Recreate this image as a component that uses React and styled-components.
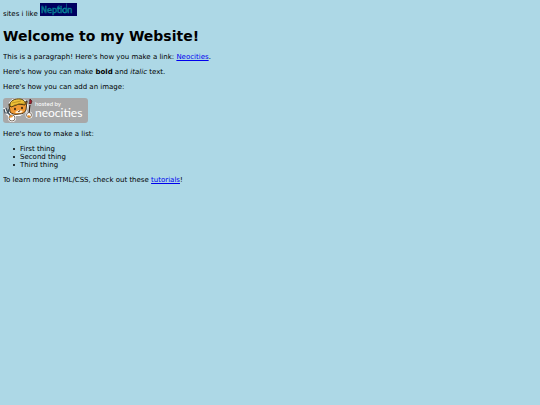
import React from "react";
import styled, { createGlobalStyle } from "styled-components";

const GlobalStyle = createGlobalStyle`
  body {
    margin: 3px;
    background-color: lightblue;
    color: black;
    font-family: Verdana, "DejaVu Sans", sans-serif;
    font-size: 7px;
    line-height: 8px;
  }
`;

const Page = styled.main`
  display: flex;
  flex-direction: column;
  gap: 7px;
`;

const Intro = styled.div`
  display: flex;
  align-items: flex-end;
  gap: 2px;
`;

const Title = styled.h1`
  margin: 3px 0 2px;
  font-size: 14px;
  line-height: 16px;
`;

const Paragraph = styled.p`
  margin: 0;
`;

const Link = styled.a`
  color: #0000ee;
  text-decoration: underline;
`;

const List = styled.ul`
  margin: 0;
  padding-left: 10px;
  list-style: none;
`;

const ListItem = styled.li`
  display: flex;
  align-items: center;
  gap: 5px;

  &::before {
    content: "";
    width: 2px;
    height: 2px;
    border-radius: 1px;
    background: black;
  }
`;

const SiteButton = styled.svg`
  display: block;
  width: 37px;
  height: 13px;
  margin-bottom: 2px;
`;

const HostBadge = styled.svg`
  display: block;
  width: 85px;
  height: 25px;
  overflow: visible;
`;

function FavouriteSite() {
  return (
    <SiteButton viewBox="0 0 37 13" role="img" aria-label="Neption">
      <rect width="37" height="13" fill="#000060" />
      <text
        x="1"
        y="10"
        fill="#001f68"
        stroke="#087f94"
        strokeWidth="0.6"
        fontFamily="DejaVu Sans, sans-serif"
        fontSize="8"
      >
        Neption
      </text>
      <g fill="none" stroke="#0aa0a8" strokeWidth="0.5">
        <circle cx="25" cy="7.5" r="2.5" />
        <path d="M19 2v5M26.500 0.500v5M17 5h5" />
      </g>
    </SiteButton>
  );
}

function NeocitiesBadge() {
  return (
    <HostBadge viewBox="0 0 85 25" role="img" aria-label="Hosted by Neocities">
      <rect width="85" height="25" rx="3" fill="#a8a8a8" />
      <g stroke="#fff" strokeWidth="2" strokeLinejoin="round" fill="#fff">
        <path d="M7 14L7 5L10 2L16 1L22 3L24 7L23 13L17 17H10z" />
        <path d="M1 10L3 15L8 19M27 3L26 15" />
        <circle cx="9" cy="20" r="3" />
        <circle cx="26" cy="17" r="2.5" />
      </g>
      <path
        d="M7 14L6 6L10 7L19 6L24 3L23 12C22 15 19 16 16 16C12 17 9 16 7 14z"
        fill="#f09a35"
        stroke="#30200c"
        strokeWidth="0.9"
      />
      <path
        d="M7 8C6 3 12 0 18 1C21 2 23 4 22 7L16 6L8 9z"
        fill="#ecc038"
        stroke="#3c2c0c"
        strokeWidth="0.9"
      />
      <path d="M9 5L18 3M11 7L21 5" stroke="#a67b16" strokeWidth="0.6" />
      <path d="M12 14L16 12L20 13L18 15H13z" fill="#fff0d8" />
      <ellipse cx="12" cy="11" rx="0.8" ry="1.200" fill="#20140c" />
      <ellipse cx="19" cy="10" rx="0.8" ry="1.200" fill="#20140c" />
      <path d="M15 13L16 14L17 12" stroke="#40200c" strokeWidth="0.7" fill="none" />
      <path
        d="M1 11L2 15L5 15L8 18M3 10L5 15M6 11L5 15"
        stroke="#43535d"
        strokeWidth="1.200"
        fill="none"
      />
      <path d="M27 7L26 15" stroke="#33241c" strokeWidth="1.400" />
      <path d="M26 6L27 1L29 3L28 6z" fill="#a01c28" stroke="#3c1014" strokeWidth="0.6" />
      <circle cx="9" cy="20" r="3" fill="#fff" stroke="#493828" strokeWidth="0.7" />
      <path d="M6 20a3 3 0 0 1 3-3l1 2z" fill="#e99431" />
      <circle cx="26" cy="17" r="2.500" fill="#fff" stroke="#493828" strokeWidth="0.7" />
      <path d="M24 18a3 3 0 0 0 4 1l-2-2z" fill="#e99431" />
      <g fill="#fff" fontFamily="Lato, sans-serif">
        <text x="32" y="8" fontSize="6">
          hosted by
        </text>
        <text x="32" y="19" fontSize="12">
          neocities
        </text>
      </g>
    </HostBadge>
  );
}

function App() {
  return (
    <>
      <GlobalStyle />
      <Page>
        <Intro>
          <span>sites i like</span>
          <FavouriteSite />
        </Intro>
        <Title>Welcome to my Website!</Title>
        <Paragraph>
          This is a paragraph! Here's how you make a link:{" "}
          <Link href="https://neocities.org">Neocities</Link>.
        </Paragraph>
        <Paragraph>
          Here's how you can make <strong>bold</strong> and <em>italic</em> text.
        </Paragraph>
        <Paragraph>Here's how you can add an image:</Paragraph>
        <NeocitiesBadge />
        <Paragraph>Here's how to make a list:</Paragraph>
        <List>
          <ListItem>First thing</ListItem>
          <ListItem>Second thing</ListItem>
          <ListItem>Third thing</ListItem>
        </List>
        <Paragraph>
          To learn more HTML/CSS, check out these{" "}
          <Link href="https://neocities.org/tutorials">tutorials</Link>!
        </Paragraph>
      </Page>
    </>
  );
}

export default App;
